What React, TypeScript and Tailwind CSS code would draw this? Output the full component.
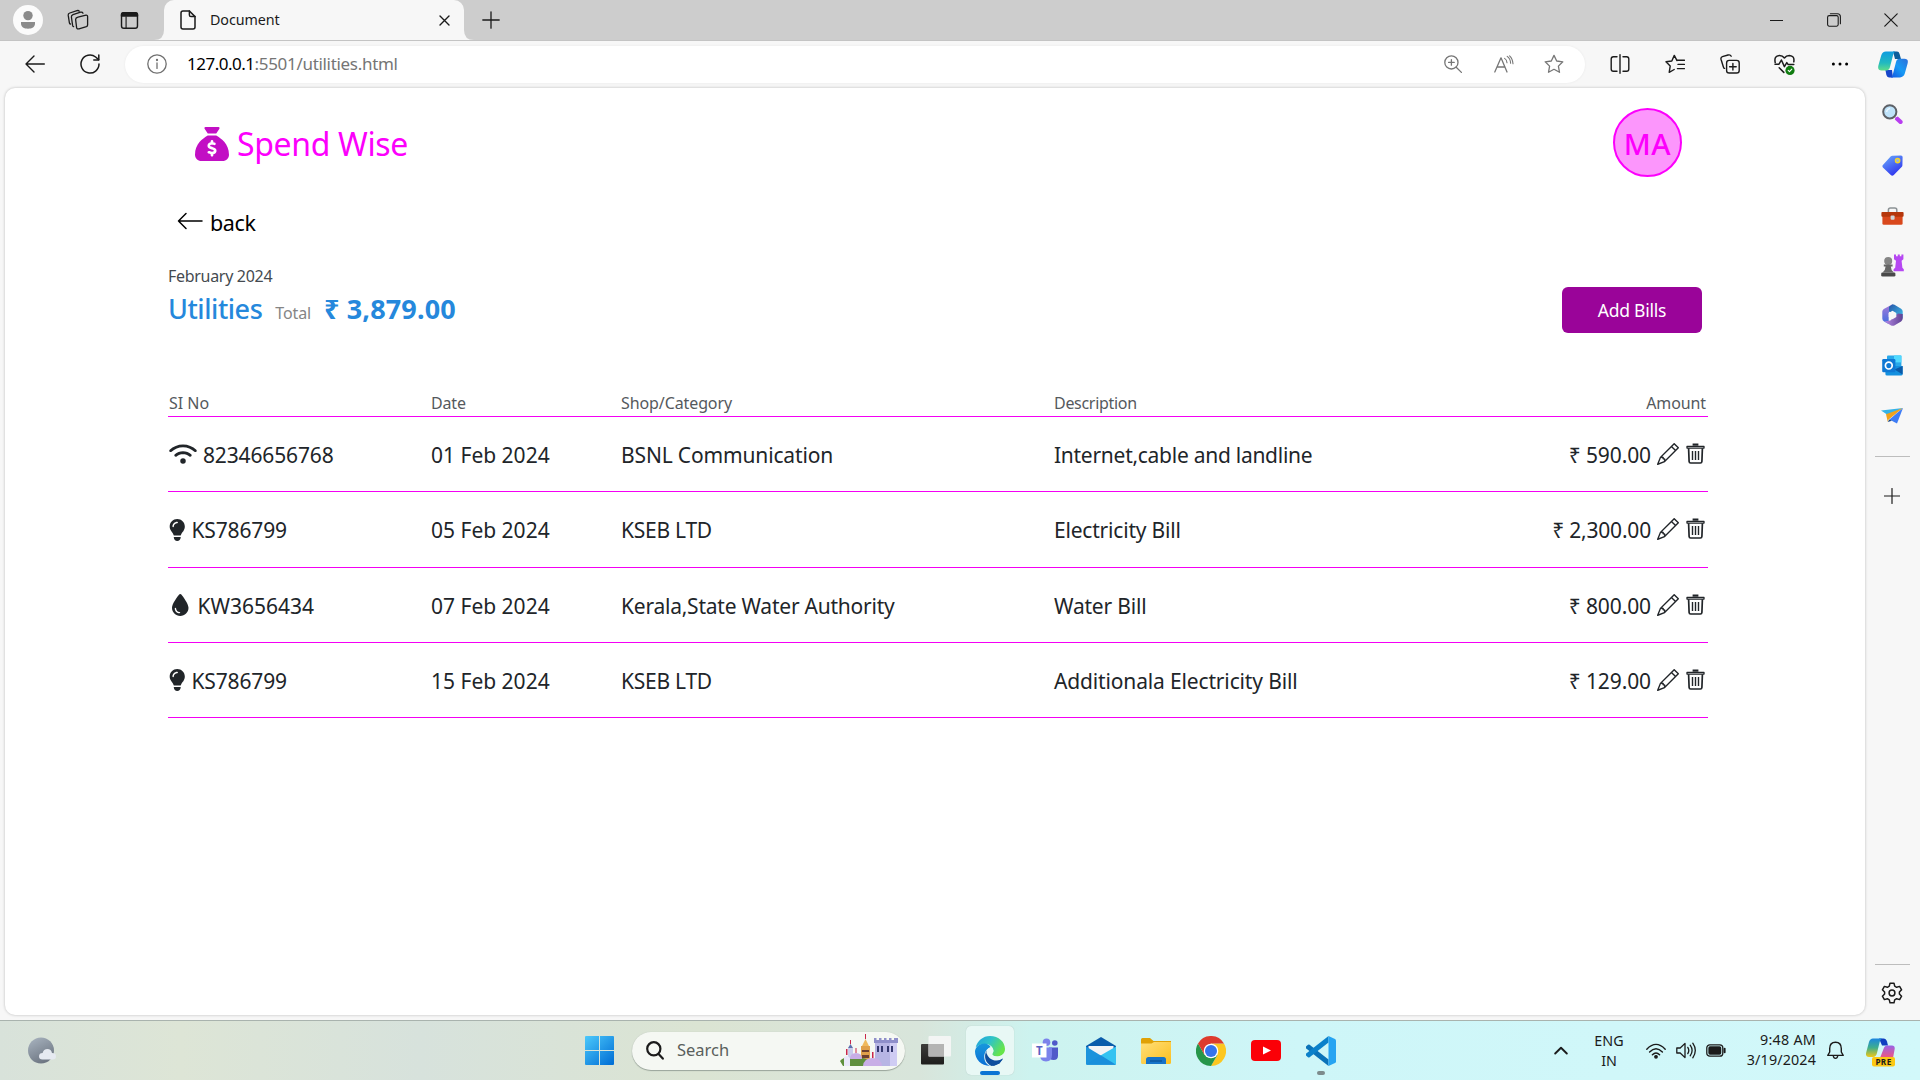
import React from "react";
import { FaWifi, FaLightbulb, FaDroplet, FaSackDollar } from "react-icons/fa6";
import { BsPencil } from "react-icons/bs";

function T({ className = "", children }: { className?: string; children: React.ReactNode }) {
  return <span className={"whitespace-pre " + className}>{children}</span>;
}

function Slot({ className, children }: { className: string; children: React.ReactNode }) {
  return <div className={"flex shrink-0 items-center justify-center " + className}>{children}</div>;
}

type IconProps = { w: number; h: number; box?: string; sw?: number; className?: string; children: React.ReactNode };
function Line({ w, h, box, sw = 1.3, className = "", children }: IconProps) {
  return (
    <svg width={w} height={h} viewBox={box || `0 0 ${w} ${h}`} fill="none" stroke="currentColor" strokeWidth={sw} strokeLinecap="round" strokeLinejoin="round" className={"shrink-0 " + className}>
      {children}
    </svg>
  );
}
function Art({ w, h, box, className = "", children }: IconProps) {
  return (
    <svg width={w} height={h} viewBox={box || `0 0 ${w} ${h}`} className={"shrink-0 " + className}>
      {children}
    </svg>
  );
}

const STAR = "M10 1.4 L12.7 7 L18.8 7.8 L14.4 12.1 L15.5 18.3 L10 15.3 L4.5 18.3 L5.6 12.1 L1.2 7.8 L7.3 7 Z";

function TitleBar() {
  return (
    <div className="flex h-10 items-center bg-[#cdcdcd] pl-2 text-[#1b1b1b]">
      <Slot className="w-10">
        <Art w={30} h={30}>
          <circle cx="15" cy="15" r="15" fill="#fbfbfb" />
          <circle cx="15" cy="10.6" r="4.7" fill="#8b8b8b" />
          <path d="M8 17h14v1.6c0 3.6-3 5.2-7 5.2s-7-1.6-7-5.2z" fill="#8b8b8b" />
        </Art>
      </Slot>
      <Slot className="w-[59px]">
        <Line w={22} h={22}>
          <path d="M11 8.2 L19 6.2 Q20.6 6 20.6 7.6 V16 Q20.6 17.2 19.4 17.6 L12 19.8 Q10 20.4 9.6 18.6 L8.6 10.4 Q8.6 8.8 11 8.2Z" />
          <path d="M6.6 17.6 Q5.8 17.4 5.6 16.4 L4.4 8 Q4.2 6.2 6 5.6 L13.6 3.2 Q15.4 2.8 16 4.2" />
          <path d="M3.4 15 Q2.6 14.8 2.4 13.8 L1.2 6.2 Q1 4.6 2.8 4 L10 1.6 Q11.6 1.2 12.2 2.2" />
        </Line>
      </Slot>
      <Slot className="w-[45px]">
        <Line w={19} h={19} box="0 0 20 20" sw={1.5}>
          <rect x="1.6" y="1.8" width="16.8" height="16.4" rx="2.4" />
          <path d="M1.6 5.2V4q0-2.2 2.2-2.2h12.4q2.2 0 2.2 2.2v1.2z" fill="currentColor" />
          <path d="M6.4 6v12" strokeWidth="1.2" />
        </Line>
      </Slot>
      <div className="relative ml-3 flex h-10 w-[300px] items-center rounded-t-[10px] bg-[#f7f7f7] pl-4">
        <svg width="10" height="10" className="absolute bottom-0 -left-[10px]"><path d="M10 0v10H0q10 0 10-10z" fill="#f7f7f7" /></svg>
        <svg width="10" height="10" className="absolute -right-[10px] bottom-0"><path d="M0 0v10h10q-10 0-10-10z" fill="#f7f7f7" /></svg>
        <Line w={16} h={20} sw={1.5}>
          <path d="M3 1h6.4L15 6.6V17q0 2-2 2H3q-2 0-2-2V3q0-2 2-2z" />
          <path d="M9.4 1v4q0 1.6 1.6 1.6h4" />
        </Line>
        <T className="ml-[14px] flex-1 text-[14.3px] tracking-[-0.09px] text-[#1b1b1b]">Document</T>
        <Slot className="w-[39px] pt-[1px]">
          <Line w={11} h={11} sw={1.4}><path d="M1 1l9 9M10 1l-9 9" /></Line>
        </Slot>
      </div>
      <Slot className="w-[53px]">
        <Line w={18} h={18} sw={1.3}><path d="M9 .8v16.4M.8 9h16.4" /></Line>
      </Slot>
      <div className="flex-1" />
      <Slot className="w-[57px]"><Line w={13} h={3} sw={1.1}><path d="M0 1.5h13" /></Line></Slot>
      <Slot className="w-[57px]">
        <Line w={14} h={14} sw={1.1}>
          <rect x=".6" y="2.6" width="10.6" height="10.6" rx="1.6" />
          <path d="M3.4 .7h7q3 0 3 3v7" />
        </Line>
      </Slot>
      <Slot className="w-[58px]"><Line w={14} h={14} sw={1.2}><path d="M.8 .8l12.4 12.4M13.2 .8L.8 13.2" /></Line></Slot>
    </div>
  );
}

function Toolbar() {
  return (
    <div className="flex h-[47px] items-center border-t border-[#c4c4c4] bg-[#f7f7f7] pl-2 text-[#1b1b1b]">
      <Slot className="w-[54px]"><Line w={20} h={18} sw={1.4}><path d="M19.3 9H1M9 1L1 9l8 8" /></Line></Slot>
      <Slot className="w-14">
        <Line w={20} h={20} sw={1.5}>
          <path d="M19 10a9 9 0 1 1-3.4-7L18.6 5.6" />
          <path d="M18.8 .9v5h-5" />
        </Line>
      </Slot>
      <div className="ml-[7px] flex h-[37px] w-[1460px] items-center rounded-full bg-white shadow-[0_0_3px_rgba(0,0,0,0.06)]">
        <Slot className="ml-[2px] w-[60px] text-[#707070]">
          <Line w={20} h={20} sw={1.3}>
            <circle cx="10" cy="10" r="9.2" />
            <path d="M10 9v5.4" />
            <circle cx="10" cy="6" r=".5" fill="currentColor" />
          </Line>
        </Slot>
        <div className="-mt-px flex flex-1 text-[17px]">
          <T className="tracking-[-0.5px] text-black">127.0.0.1</T>
          <T className="tracking-[-0.31px] text-[#757575]">:5501/utilities.html</T>
        </div>
        <Slot className="w-[52px] text-[#767676]">
          <Line w={18} h={18} sw={1.3}>
            <circle cx="7.4" cy="7.4" r="6.6" />
            <path d="M12.2 12.2l5.2 5.2M7.4 4.6v5.6M4.6 7.4h5.6" />
          </Line>
        </Slot>
        <Slot className="w-[50px] text-[#767676]">
          <Line w={20} h={18} sw={1.3}>
            <path d="M.8 17L7 2.8 13 17M3 12h8" />
            <path d="M10.6 3.4q2.200 1.400 2.400 4.400M13.200 1.400q3.200 2.200 3.400 6.800M15.600 .8q3 2.600 3.400 8" strokeWidth="1.1" />
          </Line>
        </Slot>
        <Slot className="mr-[7px] w-[49px] text-[#767676]">
          <Line w={20} h={20} sw={1.3}><path d={STAR} /></Line>
        </Slot>
      </div>
      <Slot className="ml-[7px] w-[55px]">
        <Line w={20} h={20} sw={1.4}>
          <path d="M10 .7v18.6" />
          <path d="M7 2.8H3.4q-2.2 0-2.2 2.2v10q0 2.2 2.2 2.2H7M13 2.8h3.6q2.2 0 2.2 2.2v10q0 2.2-2.2 2.2H13" />
        </Line>
      </Slot>
      <Slot className="w-[55px]">
        <Line w={20} h={20} sw={1.4}>
          <path d="M12 6.6L9.3 1.4 6.8 7 1 7.8l4.2 4.3-1 6.2 5-2.8" />
          <path d="M12.4 6.2h7M13 10.4h6.4M12.4 14.6h7" />
        </Line>
      </Slot>
      <Slot className="w-[55px]">
        <Line w={20} h={20} sw={1.4}>
          <rect x="6.6" y="6.4" width="12.6" height="12.6" rx="2.6" />
          <path d="M12.9 9.4v6.6M9.6 12.7h6.6" />
          <path d="M4.6 14.4Q3.8 14.4 3.4 13L1 5.2Q.6 3.2 2.4 2.6L8 1q2.4-.6 3.2 1.2" />
        </Line>
      </Slot>
      <Slot className="w-[55px]">
        <Line w={21} h={21} sw={1.5}>
          <path d="M1.2 8.6Q-.2 1.600 5.400 1.400q3.200 0 5 2.600 1.800-2.600 5-2.600 5.400.4 4.400 6.400" />
          <path d="M1 10.2h4L7.4 6l3 6.6 2.4-4 1.4 2h5.6M5.2 13.8l4.6 4.6" />
          <circle cx="16" cy="16.4" r="4.6" fill="#107c10" stroke="none" />
          <path d="M14.2 16.4l1.3 1.3 2.3-2.5" stroke="#fff" strokeWidth="1.1" />
        </Line>
      </Slot>
      <Slot className="w-[55px]">
        <Art w={18} h={4}>
          <circle cx="2.4" cy="2" r="1.5" /><circle cx="9" cy="2" r="1.5" /><circle cx="15.6" cy="2" r="1.5" />
        </Art>
      </Slot>
      <Slot className="w-[53px]"><Copilot /></Slot>
    </div>
  );
}

function Copilot() {
  return (
    <Art w={30} h={27} className="-ml-px">
      <defs>
        <linearGradient id="cpA" x1="0" y1="0" x2="0" y2="1"><stop offset="0" stopColor="#0d9ce0" /><stop offset=".6" stopColor="#21b9c0" /><stop offset="1" stopColor="#5ddc8b" /></linearGradient>
        <linearGradient id="cpB" x1="1" y1="0" x2="0" y2="1"><stop offset="0" stopColor="#2f6fd8" /><stop offset=".5" stopColor="#179bf5" /><stop offset="1" stopColor="#1455e0" /></linearGradient>
      </defs>
      <path d="M15 .6h4q2 0 2.600 2.400L23 8h-6z" fill="#0c5f9c" />
      <path d="M15 26.400h-4q-2 0-2.600-2.400L7.400 19H14z" fill="#1746c9" />
      <path d="M8 .6h9.4q-1.6.6-2.2 3L12 16q-.8 3.4-3.6 3.4H3.6Q-.8 19.4.4 14.6L3.2 4.4Q4.4.6 8 .6z" fill="url(#cpA)" />
      <path d="M22 26.4h-9.4q1.6-.6 2.2-3L18 11q.8-3.2 3.6-3.2h4.8q4.4 0 3.2 4.6l-2.8 10.2q-1.2 3.8-4.8 3.8z" fill="url(#cpB)" />
    </Art>
  );
}

function EdgeSidebar() {
  return (
    <div className="flex w-[54px] shrink-0 flex-col items-center pt-[2px] text-[#1b1b1b]">
      <Slot className="h-[50px]">
        <Art w={21} h={21}>
          <path d="M13.4 13.4l2.4-1 4.6 4.4q.8 1.4-.4 2.6t-2.6.4l-4.6-4.4z" fill="#b83df0" />
          <circle cx="7.8" cy="7.8" r="6.6" fill="#bfe3fa" stroke="#5d6167" strokeWidth="2" />
          <path d="M4.6 8q.4-3 3.4-3.6" stroke="#eaf7ff" strokeWidth="1.4" fill="none" />
        </Art>
      </Slot>
      <Slot className="h-[50px] pt-[3px]">
        <Art w={21} h={21}>
          <defs><linearGradient id="tagG" x1="0" y1="0" x2=".6" y2="1"><stop offset="0" stopColor="#6cb0fb" /><stop offset="1" stopColor="#2f34ee" /></linearGradient></defs>
          <path d="M10.4.8L19 .4q1.6 0 1.6 1.6l-.2 8.2q0 1-.8 1.8l-7.8 8q-1.6 1.4-3 0L.9 12.4q-1-1.2 0-2.4l7.7-8.4q.8-.8 1.8-.8z" fill="url(#tagG)" />
          <circle cx="15.6" cy="5.6" r="2.1" fill="#8fb6ee" stroke="#f5d327" strokeWidth="1.5" />
        </Art>
      </Slot>
      <Slot className="h-[50px] pt-[3px]">
        <Art w={23} h={18}>
          <path d="M7.4 6V3q0-2 2-2h4.4q2 0 2 2v3" fill="none" stroke="#8c9295" strokeWidth="1.5" />
          <rect x="1.4" y="8" width="20.2" height="9.8" rx="1.4" fill="#d9481c" />
          <rect x=".4" y="5" width="22.2" height="4.8" rx="1" fill="#b5370c" />
          <rect x="9.6" y="8.4" width="4" height="4.4" rx="1" fill="#cfd6da" />
        </Art>
      </Slot>
      <Slot className="h-[50px] pt-[2px]">
        <Art w={23} h={23}>
          <path d="M13 .6h2v1.6h1.8V.4h2v1.8h1.6V.6h2v4.6l-1.8 1.6.8 7 1.4 1.4v2H12.6v-2l1.6-1.4.8-7L13 5.2z" fill="#b648f2" />
          <g fill="#4a4a4a"><circle cx="7.2" cy="7" r="4" fill="#858585" /><path d="M2.8 10.4h8.8v2H9.8q.2 4 3 6.2H1.6q2.8-2.2 3-6.2H2.8z" fill="#666" /><rect x=".2" y="18.4" width="14.2" height="4.2" rx="1.4" /></g>
        </Art>
      </Slot>
      <Slot className="h-[50px] pt-[2px]">
        <Art w={21} h={22}>
          <defs>
            <linearGradient id="mA" x1="0" y1="0" x2="0" y2="1"><stop offset="0" stopColor="#a77ad8" /><stop offset="1" stopColor="#3e6ee0" /></linearGradient>
            <linearGradient id="mB" x1="0" y1="0" x2="1" y2="1"><stop offset="0" stopColor="#2554a6" /><stop offset="1" stopColor="#3fc3ee" /></linearGradient>
            <linearGradient id="mC" x1="0" y1="0" x2="1" y2="0"><stop offset="0" stopColor="#b78be6" /><stop offset="1" stopColor="#5e4193" /></linearGradient>
          </defs>
          <path d="M10.5.2L1.8 5Q.3 6 .3 7.6v7q0 2 1.8 3l4.6 2.4V9z" fill="url(#mA)" />
          <path d="M10.5.2q1.2 0 2 .6l6.6 4q1.6 1 1.6 2.8v7L7 7.4V2.8z" fill="url(#mB)" />
          <path d="M20.7 10v4.6q0 1.8-1.6 2.8l-6.8 4q-1.6.8-3.2 0L2.4 17.6l6-1 7.6-7z" fill="url(#mC)" />
          <path d="M10.5 6.8l3.8 2.1v4.2l-3.8 2.1-3.8-2.1V8.9z" fill="#f7f7f7" />
        </Art>
      </Slot>
      <Slot className="h-[50px] pt-[2px]">
        <Art w={21} h={21}>
          <rect x="5" y=".4" width="14.4" height="14" rx="1" fill="#28a8ea" />
          <rect x="12" y=".4" width="7.4" height="7" fill="#50d9ff" />
          <path d="M3.4 11h17.2v8q0 1.6-1.6 1.6H5q-1.6 0-1.6-1.6z" fill="#1490df" />
          <path d="M20.6 11v8.6L12.5 14.5z" fill="#0a5aa8" />
          <rect x=".2" y="4" width="13.2" height="13.2" rx="1.2" fill="#0f78d4" />
          <circle cx="6.8" cy="10.6" r="3.4" fill="none" stroke="#fff" strokeWidth="1.7" />
        </Art>
      </Slot>
      <Slot className="h-[50px] pt-[2px]">
        <Art w={22} h={17}>
          <path d="M0 3.6L22 1 8.4 9z" fill="#35b3e8" />
          <path d="M5 7.2L22 1 7.6 12.6 6.8 15z" fill="#f0a21c" />
          <path d="M22 1l-6 15.4-7.600-4z" fill="#3d7cf5" />
          <path d="M6.8 15l1.6-2.6 2.4 1.4z" fill="#13407f" />
        </Art>
      </Slot>
      <div className="mt-[17px] h-px w-[35px] bg-[#bdbdbd]" />
      <Slot className="mt-[31px] h-4"><Line w={16} h={16} sw={1.2}><path d="M8 .5v15M.5 8h15" /></Line></Slot>
      <div className="flex-1" />
      <div className="h-px w-[35px] bg-[#bdbdbd]" />
      <Slot className="h-[55px]">
        <Line w={22} h={22} sw={1.5}>
          <path d="M9 1.2h4l.7 3 1.9 1.1 3-.9 2 3.400-2.200 2.200v2l2.200 2.200-2 3.400-3-.9-1.900 1.100-.7 3H9l-.7-3-1.900-1.100-3 .9-2-3.400L3.600 12v-2L1.400 7.800l2-3.400 3 .9 1.900-1.100z" />
          <circle cx="11" cy="11" r="2.9" />
        </Line>
      </Slot>
    </div>
  );
}

function Trash() {
  return (
    <svg width="19" height="21" viewBox="0 0 19 21" fill="none" stroke="currentColor" className="-mt-[5px] mr-px shrink-0">
      <path d="M6.6 1.6h5.8" strokeWidth="2.2" />
      <path d="M1 3.4h17v1.7H1z" strokeWidth="1.3" strokeLinejoin="round" />
      <path d="M2.6 5.2l.5 13.3q.1 1.5 1.5 1.5h9.8q1.4 0 1.5-1.5l.5-13.300" strokeWidth="1.7" />
      <path d="M6.500 8v9M9.500 8v9M12.500 8v9" strokeWidth="1.4" />
    </svg>
  );
}

const GRID = "grid grid-cols-[262px_190px_433px_1fr] pl-px pr-[2px] border-b border-[#f400f4] ";

const rows = [
  {
    h: "h-[75px]", icon: <FaWifi className="-mt-[3px] mr-[6px] h-[22px] w-[28px]" />,
    no: <T className="tracking-[-0.14px]">82346656768</T>, date: "01 Feb 2024",
    shop: <T className="tracking-[-0.15px]">BSNL Communication</T>,
    desc: <T className="tracking-[-0.27px]">Internet,cable and landline</T>, amt: <T className="tracking-[-0.1px]">₹ 590.00</T>,
  },
  {
    h: "h-[76px]", icon: <FaLightbulb className="-mt-[3px] mr-[6px] h-[22px] w-[16.5px]" />,
    no: <T className="tracking-[-0.14px]">KS786799</T>, date: "05 Feb 2024",
    shop: <T className="tracking-[-0.25px]">KSEB LTD</T>,
    desc: <T className="tracking-[-0.2px]">Electricity Bill</T>, amt: <T className="tracking-[-0.2px]">₹ 2,300.00</T>,
  },
  {
    h: "h-[75px]", icon: <FaDroplet className="-mt-[3px] mr-[9px] ml-[3px] h-[22px] w-[16.5px]" />,
    no: <T>KW3656434</T>, date: "07 Feb 2024",
    shop: <T className="tracking-[-0.23px]">Kerala,State Water Authority</T>,
    desc: <T className="tracking-[-0.2px]">Water Bill</T>, amt: <T className="tracking-[-0.1px]">₹ 800.00</T>,
  },
  {
    h: "h-[75px]", icon: <FaLightbulb className="-mt-[3px] mr-[6px] h-[22px] w-[16.5px]" />,
    no: <T className="tracking-[-0.14px]">KS786799</T>, date: "15 Feb 2024",
    shop: <T className="tracking-[-0.25px]">KSEB LTD</T>,
    desc: <T className="tracking-[-0.15px]">Additionala Electricity Bill</T>, amt: <T className="tracking-[-0.1px]">₹ 129.00</T>,
  },
];

function WebPage() {
  return (
    <main className="mt-px mb-[5px] ml-[5px] flex w-[1860px] shrink-0 flex-col rounded-[10px] bg-white pr-[157px] pl-[163px] shadow-[0_0_3px_rgba(0,0,0,0.25)]">
      <header className="flex h-[118px] items-center justify-between pr-[26px] pl-[27px]">
        <div className="-mt-[6px] flex items-center text-[#fc00fc]">
          <FaSackDollar className="h-[34px] w-[34px] text-[#c20fc4]" />
          <T className="ml-[8px] text-[32px] leading-10 tracking-[-0.35px]">Spend Wise</T>
        </div>
        <div className="-mt-[9px] flex h-[69px] w-[69px] items-center justify-center rounded-full border-2 border-[#fc00fc] bg-[#fc96fc] text-[#fc00fc]">
          <T className="pt-[3px] text-[29.5px] font-medium tracking-[0.6px]">MA</T>
        </div>
      </header>
      <div className="flex h-8 items-center pl-[9px] text-black">
        <Line w={26} h={18} sw={1.5} className="-mt-[3px]"><path d="M25 9H1.500M9 1.500L1.500 9 9 16.500" /></Line>
        <T className="ml-[7px] pt-[2px] text-[21.5px] tracking-[-0.4px]">back</T>
      </div>
      <section className="mt-[25px] flex h-[79px] justify-between">
        <div className="flex flex-col">
          <T className="text-[16px] leading-[26px] tracking-[-0.3px] text-[#444a50]">February 2024</T>
          <div className="flex items-baseline pt-px text-[27px] leading-[38px] text-[#2588dc]">
            <T className="font-medium tracking-[-0.45px]">Utilities</T>
            <T className="ml-[13px] text-[16px] tracking-[-0.15px] text-[#858585]">Total</T>
            <T className="ml-[13px] font-bold tracking-[0.15px]">₹ 3,879.00</T>
          </div>
        </div>
        <button className="mt-[24px] mr-[6px] h-[46px] w-[140px] rounded-md bg-[#9a0499] text-white">
          <T className="text-[17.5px] tracking-[-0.25px]">Add Bills</T>
        </button>
      </section>
      <section className="mt-[49px] text-[#212529]">
        <div className={GRID + "h-[26px] text-[16px] leading-[24px] text-[#55595d]"}>
          <T>SI No</T>
          <T className="tracking-[-0.15px]">Date</T>
          <T className="tracking-[-0.1px]">Shop/Category</T>
          <div className="flex justify-between">
            <T className="tracking-[-0.3px]">Description</T>
            <T className="tracking-[-0.1px]">Amount</T>
          </div>
        </div>
        {rows.map((r) => (
          <div key={r.date} className={GRID + "items-center pt-[3px] text-[21px] " + r.h}>
            <div className="flex items-center">
              {r.icon}
              {r.no}
            </div>
            <div><T>{r.date}</T></div>
            <div>{r.shop}</div>
            <div className="flex items-center justify-between">
              {r.desc}
              <div className="flex items-center">
                {r.amt}
                <BsPencil className="-mt-[4px] mr-[7px] ml-[6px] h-[22px] w-[22px]" />
                <Trash />
              </div>
            </div>
          </div>
        ))}
      </section>
    </main>
  );
}

function Castle() {
  return (
    <Art w={58} h={33}>
      <rect x="35" y="7" width="22" height="25" fill="#b7b5e4" />
      <rect x="50" y="7" width="7" height="25" fill="#cfccf3" />
      <path d="M34 4h2.500v2H39V4h2.500v2H44V4h2.500v2H49V4h2.500v2H54V4h4v5H34z" fill="#8f8fca" />
      <path d="M37 12h2v6h-2zM41 12h2v6h-2zM47 12h2v6h-2zM51 12h2v6h-2z" fill="#34386f" />
      <rect x="21" y="12" width="9" height="20" fill="#e0a04a" />
      <path d="M22 12l3.500-7L29 12z" fill="#f0b95c" /><path d="M25 5h1V0h-1z" fill="#c9274b" />
      <path d="M22 16h7v2h-7zM22 21h7v3h-7z" fill="#6e4030" />
      <rect x="8" y="14" width="5" height="18" fill="#c8cdec" /><path d="M8 14l2.500-4 2.500 4z" fill="#5e6fae" /><path d="M10 10h1V6h-1z" fill="#c9274b" />
      <path d="M0 27q4-5 10-3 14-2 20 3l3 5H3z" fill="#5f8f3d" />
      <path d="M10 25q0-6 6-6t6 6z" fill="#c8aee6" /><path d="M15.500 19h1v-5h-1z" fill="#c9274b" />
      <path d="M4 32V24q2.500-4 6 0v8z" fill="#e9e8fa" /><path d="M6 21h1.500v-6H6z" fill="#c9274b" />
      <path d="M23 32q1-8 9.500-8T42 32z" fill="#c8aee6" /><path d="M32 24h1.500v-6H32z" fill="#c9274b" />
    </Art>
  );
}

function Taskbar() {
  return (
    <footer className="flex h-[60px] items-center border-t border-[#a9b3ae] bg-[linear-gradient(90deg,#d8e2da_0px,#dde5d6_180px,#d7e2dc_420px,#dbe4d3_700px,#d8e5db_920px,#cdf3ef_1030px,#cef6f8_1300px,#d2f8fa_1920px)] text-[#1b1b1b]">
      <Slot className="ml-[27px] w-[29px]">
        <Art w={29} h={27}>
          <defs>
            <linearGradient id="moon" x1="0" y1="0" x2=".5" y2="1"><stop offset="0" stopColor="#aab5c1" /><stop offset="1" stopColor="#6f7884" /></linearGradient>
          </defs>
          <circle cx="14" cy="13.5" r="13" fill="url(#moon)" />
          <path d="M15.5 22.500q-3.500 0-3.500-3.200t3.600-3.300q1-4 4.800-4t4.600 4q4 0 4 3.300t-3.500 3.200z" fill="#e6eaf1" />
        </Art>
      </Slot>
      <Slot className="ml-[529px] w-[29px]">
        <Art w={29} h={29}>
          <defs><linearGradient id="win" gradientUnits="userSpaceOnUse" x1="0" y1="0" x2="26" y2="29"><stop offset="0" stopColor="#4cc9fb" /><stop offset="1" stopColor="#0270d6" /></linearGradient></defs>
          <path d="M1 0h13v14H0V1q0-1 1-1zM15 0h13q1 0 1 1v13H15zM0 15h14v14H1q-1 0-1-1zM15 15h14v13q0 1-1 1H15z" fill="url(#win)" />
        </Art>
      </Slot>
      <div className="ml-[18px] flex h-[38px] w-[273px] items-center rounded-full bg-[#f5f8f3] pr-[7px] pl-[14px] shadow-[0_1px_1px_#9aa59b,0_0_1px_#b5beb5]">
        <Line w={18} h={19} sw={2.2}><circle cx="7.8" cy="7.8" r="6.6" /><path d="M12.600 13l4.200 4.600" /></Line>
        <T className="ml-[13px] flex-1 text-[16.5px] text-[#5a5f5b]">Search</T>
        <Castle />
      </div>
      <Slot className="ml-[16px] w-[30px]">
        <Art w={30} h={29}>
          <defs><linearGradient id="tv" x1="0" y1="0" x2="0" y2="1"><stop offset="0" stopColor="#3c3c3a" /><stop offset="1" stopColor="#1e1e1c" /></linearGradient></defs>
          <rect x="0" y="8" width="23" height="20.5" rx="1" fill="url(#tv)" />
          <rect x="7.5" y="0" width="22.5" height="20.5" rx="1" fill="#f6f6f6" fillOpacity=".9" />
          <rect x="7.5" y="8" width="15.5" height="12.5" fill="#b4b4b3" />
        </Art>
      </Slot>
      <Slot className="relative ml-[15px] h-[49px] w-[48px] rounded-[5px] bg-[#e8f8f5] shadow-[0_0_1px_#a5bdb8]">
        <Art w={30} h={30}>
          <defs>
            <linearGradient id="eA" x1="0" y1="0" x2="1" y2=".5"><stop offset="0" stopColor="#1f9fe0" /><stop offset=".5" stopColor="#2fc3c8" /><stop offset="1" stopColor="#66e54a" /></linearGradient>
            <linearGradient id="eB" x1="0" y1="0" x2="0" y2="1"><stop offset="0" stopColor="#1798dc" /><stop offset="1" stopColor="#0b6fd6" /></linearGradient>
          </defs>
          <path d="M.6 11.6C2.2 4.8 8 0 15 0c8.8 0 15 6 15 13 0 4.400-3.400 7.400-7.800 7.400-3.200 0-5-1-5-2.200 0-.8 1.200-1.400 1.200-3.600 0-3.200-3.400-6.600-8-6.600-4.600 0-8 1.600-9.800 3.600z" fill="url(#eA)" />
          <path d="M15.600 11.200C14.600 8.600 12 7.400 9.600 7.400 4 7.400 0 11.400 0 15.600 0 23.400 6.400 30 15 30c-5-2-6.600-8-5.400-12 .8-3.400 3-5.600 6-6.800z" fill="url(#eB)" />
          <path d="M11.600 14.600c-3.600 6.400-.4 13.600 5 15.300 4.400-.3 8.600-2.700 11-6.500.4-.8-.2-1.200-1-.8-6.600 3-13.600-.8-15-8z" fill="#0f4f9e" />
          <path d="M11.400 17c0-2.800 1.800-5.400 4.200-5.800 1.800.6 2.800 2 2.800 3.600 0 2-1.200 2.600-1.200 3.400 0 1.200 1.800 2.200 5 2.200 2 0 4-.6 5.600-2l-.4 4.600q-5 2.400-9.400 1T11.400 17z" fill="#e8f8f5" />
          <path d="M11.600 18c.4 5.800 6.400 9 13.400 6.200l2.600-1.800-3 5-6 2.400-6.400-5z" fill="#0f4f9e" />
        </Art>
        <div className="absolute bottom-0 left-[14px] h-1 w-5 rounded-full bg-[#0a74d4]" />
      </Slot>
      <Slot className="ml-[4px] w-[55px]">
        <Art w={27} h={25}>
          <circle cx="14.5" cy="4.2" r="3.8" fill="#7b83eb" /><circle cx="22.8" cy="5" r="2.8" fill="#5059c9" />
          <path d="M17 9.500h9v8q0 4.500-4.500 4.500T17 18z" fill="#5059c9" />
          <path d="M8 9.500h12v7q0 7-6 7t-6-7z" fill="#7b83eb" />
          <rect x="0" y="5.5" width="14.5" height="14" fill="#fff" />
          <text x="7.2" y="16.5" textAnchor="middle" fontFamily="Noto Sans" fontWeight="700" fontSize="11.5" fill="#5a62c3">T</text>
        </Art>
      </Slot>
      <Slot className="w-[55px]">
        <Art w={30} h={28}>
          <path d="M0 9L15 0l15 9v4H0z" fill="#0b5cab" />
          <path d="M2.500 9h25v8L15 21 2.500 17z" fill="#f4f4f6" />
          <path d="M0 9.500L30 27.800H1q-1 0-1-1z" fill="#1c93dc" />
          <path d="M30 9.500v17q0 1.300-1 1.300L14.500 18.500z" fill="#35c3f1" />
          <path d="M0 27.800h30L14.800 18.300z" fill="#1a8fdb" />
        </Art>
      </Slot>
      <Slot className="w-[55px]">
        <Art w={30} h={26}>
          <defs><linearGradient id="fo" x1="0" y1="0" x2="1" y2="1"><stop offset="0" stopColor="#ffdf7a" /><stop offset="1" stopColor="#fcbf1e" /></linearGradient></defs>
          <path d="M0 1.500Q0 0 1.500 0H9l3.500 3H30v6H0z" fill="#e0a106" />
          <path d="M0 5.500h10.500L13 4h17v20.500q0 1.500-1.500 1.500h-27Q0 26 0 24.500z" fill="url(#fo)" />
          <path d="M5 26v-4.500Q5 19 7.500 19h15q2.500 0 2.500 2.500V26z" fill="#1673c8" />
          <path d="M9 23h12" stroke="#0b4f92" strokeWidth="1.2" />
        </Art>
      </Slot>
      <Slot className="w-[55px]">
        <Art w={30} h={30}>
          <path d="M15 7.500h13A15 15 0 0 1 15 30l6.500-11.200z" fill="#fcc720" />
          <path d="M2 7.500L8.500 18.800 21.500 18.800 15 30A15 15 0 0 1 2 7.500z" fill="#27964a" />
          <path d="M2 7.500A15 15 0 0 1 28 7.500H15L8.500 18.800z" fill="#de3b2d" />
          <circle cx="15" cy="15" r="7.3" fill="#fff" /><circle cx="15" cy="15" r="6" fill="#3574ec" />
        </Art>
      </Slot>
      <Slot className="w-[55px]">
        <Art w={30} h={21}>
          <rect width="30" height="21" rx="4" fill="#fb0007" /><path d="M12 6.500l8 4-8 4z" fill="#fff" />
        </Art>
      </Slot>
      <Slot className="relative h-[49px] w-[55px]">
        <Art w={30} h={30}>
          <path d="M0 10.500l2-1.800q.8-.6 1.600 0L22.500 23.500V30L.2 12.500q-.8-1-.2-2z" fill="#0b72b8" />
          <path d="M0 19.500l2 1.800q.8.600 1.600 0L22.500 6.500V0L.2 17.500q-.8 1-.2 2z" fill="#0b80ca" />
          <path d="M22.500 0L29 3q1 .6 1 1.600v20.800q0 1-1 1.600l-6.500 3z" fill="#27a4f2" />
        </Art>
        <div className="absolute bottom-0 left-[23.5px] h-1 w-2 rounded-full bg-[#7d8b8c]" />
      </Slot>
      <div className="flex-1" />
      <Slot className="w-[40px]"><Line w={14} h={9} sw={1.9}><path d="M1.200 7.500L7 1.800l5.800 5.700" /></Line></Slot>
      <div className="flex w-[56px] flex-col items-center text-[14.3px] leading-5">
        <T className="tracking-[0.1px]">ENG</T>
        <T>IN</T>
      </div>
      <Slot className="ml-[4px] w-[30px]">
        <Line w={20} h={16} sw={1.4}>
          <path d="M.8 6.200q9.200-9.600 18.400 0M3.600 9q6.400-6.600 12.800 0M6.400 11.800q3.600-3.600 7.200 0" />
          <circle cx="10" cy="13.8" r="1.2" fill="currentColor" />
        </Line>
      </Slot>
      <Slot className="w-[30px]">
        <Line w={20} h={17} sw={1.3}>
          <path d="M.8 6h3.400L9 1.400v14.200L4.200 11H.8z" />
          <path d="M11.800 5.400q2 3.100 0 6.200M14.200 3.200q3.800 5.300 0 10.600M16.800 1.200q5 7.300 0 14.600" />
        </Line>
      </Slot>
      <Slot className="w-[30px]">
        <Line w={20} h={13} sw={1.3}>
          <rect x=".8" y=".8" width="16" height="11.4" rx="3" /><rect x="3" y="3" width="11.6" height="7" rx="1" fill="currentColor" /><path d="M18.600 4.800v3.400" strokeWidth="2" />
        </Line>
      </Slot>
      <div className="flex w-[85px] flex-col items-end pb-[2px] text-[14.3px] leading-5">
        <T className="tracking-[0.25px]">9:48 AM</T>
        <T className="tracking-[0.15px]">3/19/2024</T>
      </div>
      <Slot className="ml-[4px] w-[30px]">
        <Line w={17} h={19} sw={1.4}>
          <path d="M8.500 1.200q5.800 0 5.800 6.400V11l1.900 3.400H.8L2.700 11V7.600q0-6.400 5.800-6.400zM6.300 15q.4 2.400 2.200 2.400T10.700 15" />
        </Line>
      </Slot>
      <Slot className="mr-[25px] ml-[16px] w-[29px] pt-[3px]">
        <Art w={29} h={29}>
          <defs>
            <linearGradient id="pA" x1="0" y1="0" x2="0" y2="1"><stop offset="0" stopColor="#1a86e0" /><stop offset=".5" stopColor="#3fae8c" /><stop offset="1" stopColor="#f0c818" /></linearGradient>
            <linearGradient id="pB" x1="0" y1="0" x2="0" y2="1"><stop offset="0" stopColor="#9a62e6" /><stop offset="1" stopColor="#f0567e" /></linearGradient>
          </defs>
          <path d="M13 .5h4.500q2.500 0 3.500 3l1 4h-6z" fill="#0f3ec0" />
          <path d="M7 .5h9q-1.500.8-2.200 3L11 15q-1 4-4 4H3q-4 0-2.800-4.500L3 4Q4 .5 7 .5z" fill="url(#pA)" />
          <path d="M21 7.500h5q3.500 0 2.500 4.500L27 20H14l3.500-9Q18.500 7.500 21 7.500z" fill="url(#pB)" />
          <rect x="6" y="19" width="23" height="9.5" rx="2" fill="#fcc813" />
          <text x="17.5" y="26.8" textAnchor="middle" fontFamily="Noto Sans" fontWeight="700" fontSize="8.2" letterSpacing=".4" fill="#1b1b1b">PRE</text>
        </Art>
      </Slot>
    </footer>
  );
}

export default function App() {
  return (
    <div className="flex h-[1080px] w-[1920px] flex-col overflow-hidden bg-[#f7f7f7] font-['Noto_Sans',sans-serif]">
      <TitleBar />
      <Toolbar />
      <div className="flex min-h-0 flex-1">
        <WebPage />
        <EdgeSidebar />
      </div>
      <Taskbar />
    </div>
  );
}
